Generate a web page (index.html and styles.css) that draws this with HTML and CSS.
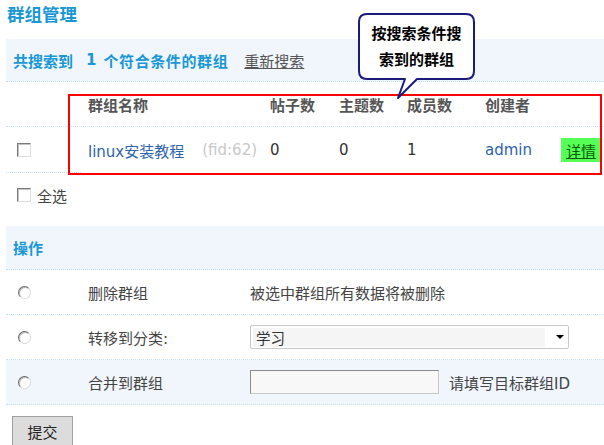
FILE: index.html
```html
<!DOCTYPE html>
<html lang="zh-CN">
<head>
<meta charset="utf-8">
<title>群组管理</title>
<link rel="stylesheet" href="styles.css">
</head>
<body>
<div class="page">
  <h1 class="title">群组管理</h1>
  <div class="bar">
    <span>共搜索到</span><span class="count">1</span><span class="wide">个符合条件的群组</span><a class="research" href="#">重新搜索</a>
  </div>

  <div class="grid head">
    <div class="c first"></div>
    <div class="c">群组名称</div>
    <div class="c">帖子数</div>
    <div class="c">主题数</div>
    <div class="c">成员数</div>
    <div class="c">创建者</div>
    <div class="c"></div>
  </div>
  <div class="grid data">
    <div class="c first line"><input class="cb" type="checkbox"></div>
    <div class="c"><a class="link" href="#">linux安装教程</a><span class="fid">(fid:62)</span></div>
    <div class="c num">0</div>
    <div class="c num">0</div>
    <div class="c num">1</div>
    <div class="c"><a class="link" href="#">admin</a></div>
    <div class="c"><a class="detail" href="#">详情</a></div>
  </div>

  <div class="selall"><input class="cb" type="checkbox"><span>全选</span></div>

  <div class="bar ops">操作</div>
  <div class="oprow">
    <div class="c first"><input class="rd" type="radio" name="op"></div>
    <div class="c">删除群组</div>
    <div class="c">被选中群组所有数据将被删除</div>
  </div>
  <div class="oprow">
    <div class="c first"><input class="rd" type="radio" name="op"></div>
    <div class="c">转移到分类:</div>
    <div class="c">
      <div class="select"><span class="sel-val">学习</span><span class="sel-arrow"></span></div>
    </div>
  </div>
  <div class="oprow alt">
    <div class="c first"><input class="rd" type="radio" name="op"></div>
    <div class="c">合并到群组</div>
    <div class="c"><input class="txt" type="text"><span class="hint">请填写目标群组ID</span></div>
  </div>
  <button class="submit" type="button">提交</button>
</div>

<div class="redbox"></div>
<div class="callout">
  <svg class="callout-shape" width="125" height="95" viewBox="0 0 125 95">
    <path d="M12,6 H111 Q119,6 119,14 V63 Q119,71 111,71 H62 L43,90 L50,71 H12 Q4,71 4,63 V14 Q4,6 12,6 Z" fill="#ffffff" stroke="#1b1b78" stroke-width="2" stroke-linejoin="round"/>
  </svg>
  <div class="callout-text"><span>按搜索条件搜</span><span>索到的群组</span></div>
</div>
</body>
</html>
```

FILE: styles.css
```css
* { box-sizing: border-box; margin: 0; padding: 0; }
html, body { background: #fff; }
body {
  width: 604px;
  height: 445px;
  overflow: hidden;
  font-family: "DejaVu Sans", "Noto Sans CJK SC", sans-serif;
  font-size: 15px;
  color: #444;
}
a { text-decoration: none; }
.page { padding-left: 6px; }

.title {
  font-size: 17.5px;
  font-weight: bold;
  color: #1a97d5;
  height: 39px;
  line-height: 31px;
  padding-left: 1px;
}

.bar {
  height: 43px;
  background: #f1f6fd;
  border-bottom: 1px dotted #bfdff2;
  display: flex;
  align-items: center;
  padding-left: 7px;
  font-weight: bold;
  color: #1a97d5;
}
.count { margin: 0 7px 0 13px; }
.wide { letter-spacing: 0.6px; }
.research {
  margin-left: 16px;
  font-weight: normal;
  color: #555;
  text-decoration: underline;
}

.grid {
  display: grid;
  grid-template-columns: 75px 182px 69px 68px 78px 76px 1fr;
  height: 45px;
  border-bottom: 1px dotted #c6e2f5;
}
.grid .c, .oprow .c {
  display: flex;
  align-items: center;
  padding-left: 7px;
}
.grid .first { padding-left: 11px; }
.head { font-weight: bold; color: #555; }
.data { height: 46px; border-bottom: none; }
.data .line { border-bottom: 1px dotted #c6e2f5; }
.num { color: #333; }
.link { color: #2d63ad; }
.fid { color: #c8c8c8; margin-left: 18px; }
.detail {
  background: #55ff55;
  color: #0a5a0a;
  text-decoration: underline;
  height: 24px;
  padding: 0 5px;
  display: flex;
  align-items: center;
}

.cb {
  appearance: none;
  -webkit-appearance: none;
  width: 14px;
  height: 14px;
  background: #fff;
  border: 1px solid;
  border-color: #7a7a7a #dcdcdc #dcdcdc #7a7a7a;
  box-shadow: inset 1px 1px 0 #c4c4c4;
  margin: 0;
}
.rd {
  appearance: none;
  -webkit-appearance: none;
  width: 13px;
  height: 13px;
  border-radius: 50%;
  background: #fff;
  border: 1px solid;
  border-color: #6a6a6a #d8d8d8 #d8d8d8 #6a6a6a;
  box-shadow: inset 1px 1px 0 #bdbdbd;
  margin: 0;
}

.selall {
  height: 44px;
  margin-bottom: 9px;
  display: flex;
  align-items: center;
  gap: 6px;
  padding-left: 11px;
}

.ops { height: 44px; }

.oprow {
  display: grid;
  grid-template-columns: 75px 162px 1fr;
  height: 45px;
  border-bottom: 1px dotted #c6e2f5;
}
.oprow:first-of-type { height: 44px; }
.oprow .first { padding-left: 12px; }
.oprow.alt { background: #f1f6fd; }

.select {
  width: 319px;
  height: 24px;
  border: 1px solid #c8c8c8;
  border-radius: 2px;
  background: #fff;
  display: flex;
  align-items: center;
  padding: 2px;
}
.sel-val {
  width: 292px;
  height: 19px;
  background: #f5f5f5;
  display: flex;
  align-items: center;
  padding-left: 3px;
  font-size: 14.5px;
  color: #333;
}
.sel-arrow {
  margin-left: 11px;
  width: 0;
  height: 0;
  border-left: 4px solid transparent;
  border-right: 4px solid transparent;
  border-top: 4px solid #000;
}

.txt {
  width: 189px;
  height: 24px;
  border: 1px solid;
  border-color: #8a8a8a #c8c8c8 #c8c8c8 #8a8a8a;
  background: #f8f8f8;
}
.hint { margin-left: 10px; }

.submit {
  margin: 11px 0 0 6px;
  width: 61px;
  height: 30px;
  background: #dcdcdc;
  border: 1px solid #a0a0a0;
  font-family: "Noto Sans CJK SC", sans-serif;
  font-size: 15px;
  color: #222;
}

.redbox {
  position: absolute;
  left: 68px;
  top: 94px;
  width: 534px;
  height: 81px;
  border: 2px solid #ff0000;
}

.callout {
  position: absolute;
  left: 355px;
  top: 8px;
  width: 125px;
  height: 95px;
}
.callout-shape { position: absolute; left: 0; top: 0; }
.callout-text {
  position: absolute;
  left: 4px;
  top: 12px;
  width: 115px;
  display: flex;
  flex-direction: column;
  align-items: center;
  font-family: "Noto Sans CJK SC", sans-serif;
  font-weight: bold;
  font-size: 15px;
  line-height: 26px;
  color: #000;
}
```
